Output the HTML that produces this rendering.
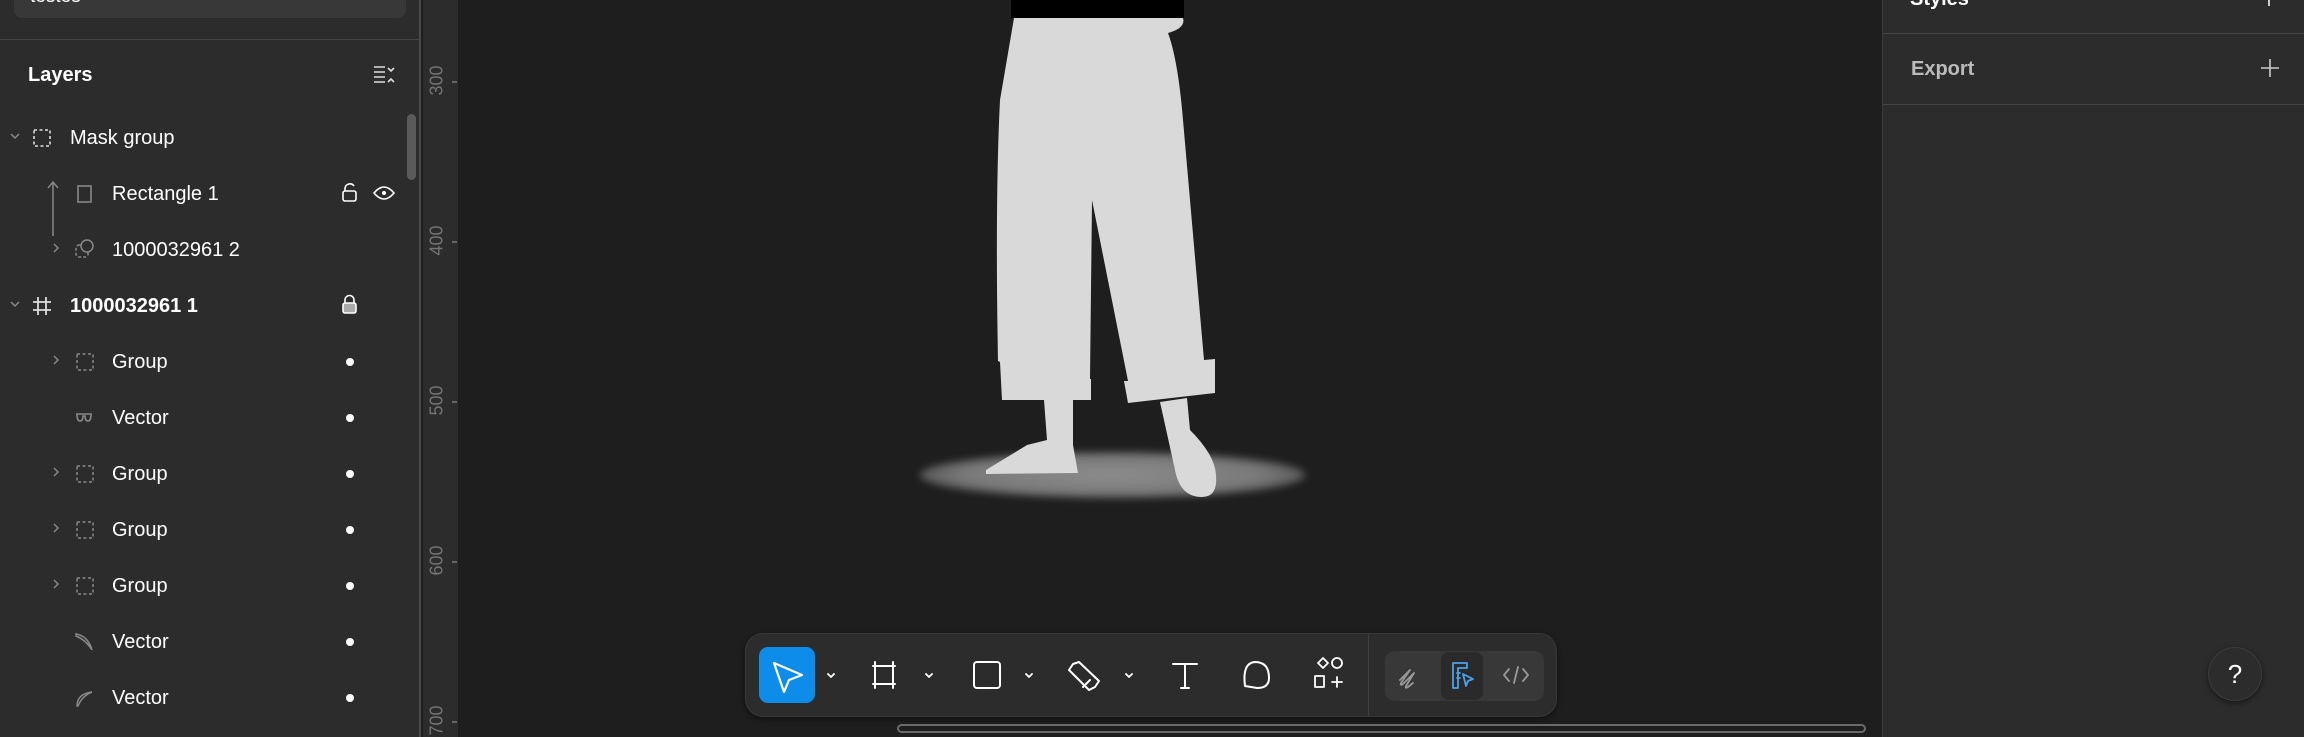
<!DOCTYPE html>
<html><head><meta charset="utf-8"><style>
*{margin:0;padding:0;box-sizing:border-box}
body{width:2304px;height:737px;overflow:hidden;background:#1e1e1e;font-family:"Liberation Sans",sans-serif;position:relative}
.abs{position:absolute}
#left{left:0;top:0;width:421px;height:737px;background:#2c2c2c;border-right:2px solid #4a4a4a}
#ruler{left:423px;top:0;width:35px;height:737px;background:#2c2c2c}
.rl{position:absolute;left:421px;width:32px;color:#747474;font-size:18px;transform:rotate(-90deg);text-align:center}
.tick{position:absolute;left:452px;width:5px;height:2px;background:#666}
.row{position:absolute;left:0;width:420px;height:56px;color:#fff;font-size:20px}
.row .t{position:absolute;top:17px}
.dot{position:absolute;left:346px;top:24px;width:8px;height:8px;border-radius:50%;background:#fff}
.chev{position:absolute;top:20px}
#right{left:1882px;top:0;width:422px;height:737px;background:#2c2c2c;border-left:1px solid #3c3c3c}
</style></head><body>
<div id="left" class="abs">
  <div class="abs" style="left:14px;top:-30px;width:392px;height:48px;background:#383838;border-radius:8px"></div>
  <div class="abs" style="left:30px;top:-14px;color:#fff;font-size:19px">testes</div>
  <div class="abs" style="left:0;top:39px;width:420px;height:1px;background:#444"></div>
  <div class="abs" style="left:28px;top:64px;color:#fff;font-size:20px;font-weight:bold">Layers</div>
  <svg class="abs" style="left:372px;top:64px" width="26" height="22" viewBox="0 0 26 22" fill="none" stroke="#ddd" stroke-width="1.6"><path d="M2 3h11M2 8h11M2 13h11M2 18h11M16 4l3 3 3-3M16 18l3-3 3 3"/></svg>
  <div class="abs" style="left:407px;top:114px;width:9px;height:66px;border-radius:5px;background:#5a5a5a"></div>

  <div class="row" style="top:110px">
    <svg class="chev" style="left:9px" width="12" height="12"><path d="M2 4l4 4 4-4" stroke="#888" fill="none" stroke-width="1.5"/></svg>
    <svg class="abs" style="left:32px;top:18px" width="20" height="20"><rect x="2" y="2" width="16" height="16" fill="none" stroke="#ddd" stroke-width="1.6" stroke-dasharray="3 2.5"/></svg>
    <span class="t" style="left:70px">Mask group</span>
  </div>
  <div class="row" style="top:166px">
    <svg class="abs" style="left:46px;top:14px" width="14" height="56"><path d="M7 2v54M2 8l5-6 5 6" stroke="#888" fill="none" stroke-width="1.5"/></svg>
    <svg class="abs" style="left:75px;top:18px" width="20" height="20"><rect x="3" y="2" width="13" height="16" fill="none" stroke="#888" stroke-width="1.6"/></svg>
    <span class="t" style="left:112px">Rectangle 1</span>
    <svg class="abs" style="left:341px;top:16px" width="18" height="22"><path d="M4 9V6a5 5 0 0 1 9-2" stroke="#fff" fill="none" stroke-width="1.6"/><rect x="2" y="9" width="13" height="10" rx="2" fill="none" stroke="#fff" stroke-width="1.6"/></svg>
    <svg class="abs" style="left:372px;top:17px" width="24" height="20"><path d="M2 10q10-12 20 0q-10 12-20 0z" stroke="#fff" fill="none" stroke-width="1.6"/><circle cx="12" cy="10" r="2" fill="#fff"/></svg>
  </div>
  <div class="row" style="top:222px">
    <svg class="chev" style="left:50px" width="12" height="12"><path d="M4 2l4 4-4 4" stroke="#888" fill="none" stroke-width="1.5"/></svg>
    <svg class="abs" style="left:74px;top:16px" width="22" height="22"><rect x="2" y="7" width="12" height="12" rx="3" fill="none" stroke="#888" stroke-width="1.5" stroke-dasharray="3 2"/><circle cx="13" cy="8" r="6" fill="#2c2c2c" stroke="#888" stroke-width="1.5"/></svg>
    <span class="t" style="left:112px">1000032961 2</span>
  </div>
  <div class="row" style="top:278px">
    <svg class="chev" style="left:9px" width="12" height="12"><path d="M2 4l4 4 4-4" stroke="#888" fill="none" stroke-width="1.5"/></svg>
    <svg class="abs" style="left:32px;top:18px" width="20" height="20"><path d="M6 1v18M14 1v18M1 6h18M1 14h18" stroke="#ddd" stroke-width="1.8"/></svg>
    <span class="t" style="left:70px;font-weight:bold">1000032961 1</span>
    <svg class="abs" style="left:341px;top:16px" width="18" height="22"><path d="M4 9V6a4.5 4.5 0 0 1 9 0v3" stroke="#fff" fill="none" stroke-width="1.6"/><rect x="2" y="9" width="13" height="10" rx="2" fill="#aaa" stroke="#fff" stroke-width="1.6"/></svg>
  </div>
  <div class="row" style="top:334px"><svg class="chev" style="left:50px" width="12" height="12"><path d="M4 2l4 4-4 4" stroke="#888" fill="none" stroke-width="1.5"/></svg><svg class="abs" style="left:75px;top:18px" width="20" height="20"><rect x="2" y="2" width="16" height="16" fill="none" stroke="#888" stroke-width="1.5" stroke-dasharray="3 2.5"/></svg><span class="t" style="left:112px">Group</span><div class="dot"></div></div>
  <div class="row" style="top:390px"><svg class="abs" style="left:74px;top:21px" width="20" height="14"><path d="M2 3h16M3 3q0 7 3 7t3-5h2q0 5 3 5t3-7" stroke="#888" fill="none" stroke-width="1.6"/></svg><span class="t" style="left:112px">Vector</span><div class="dot"></div></div>
  <div class="row" style="top:446px"><svg class="chev" style="left:50px" width="12" height="12"><path d="M4 2l4 4-4 4" stroke="#888" fill="none" stroke-width="1.5"/></svg><svg class="abs" style="left:75px;top:18px" width="20" height="20"><rect x="2" y="2" width="16" height="16" fill="none" stroke="#888" stroke-width="1.5" stroke-dasharray="3 2.5"/></svg><span class="t" style="left:112px">Group</span><div class="dot"></div></div>
  <div class="row" style="top:502px"><svg class="chev" style="left:50px" width="12" height="12"><path d="M4 2l4 4-4 4" stroke="#888" fill="none" stroke-width="1.5"/></svg><svg class="abs" style="left:75px;top:18px" width="20" height="20"><rect x="2" y="2" width="16" height="16" fill="none" stroke="#888" stroke-width="1.5" stroke-dasharray="3 2.5"/></svg><span class="t" style="left:112px">Group</span><div class="dot"></div></div>
  <div class="row" style="top:558px"><svg class="chev" style="left:50px" width="12" height="12"><path d="M4 2l4 4-4 4" stroke="#888" fill="none" stroke-width="1.5"/></svg><svg class="abs" style="left:75px;top:18px" width="20" height="20"><rect x="2" y="2" width="16" height="16" fill="none" stroke="#888" stroke-width="1.5" stroke-dasharray="3 2.5"/></svg><span class="t" style="left:112px">Group</span><div class="dot"></div></div>
  <div class="row" style="top:614px"><svg class="abs" style="left:74px;top:17px" width="20" height="22"><path d="M2 3q12 2 16 16q-6-10-16-14z" stroke="#888" fill="none" stroke-width="1.5"/></svg><span class="t" style="left:112px">Vector</span><div class="dot"></div></div>
  <div class="row" style="top:670px"><svg class="abs" style="left:74px;top:17px" width="20" height="22"><path d="M3 19q0-12 15-14q-10 4-14 14z" stroke="#888" fill="none" stroke-width="1.5"/></svg><span class="t" style="left:112px">Vector</span><div class="dot"></div></div>
</div>

<div id="ruler" class="abs"></div>
<div class="rl" style="top:70px">300</div><div class="tick" style="top:81px"></div>
<div class="rl" style="top:230px">400</div><div class="tick" style="top:241px"></div>
<div class="rl" style="top:390px">500</div><div class="tick" style="top:401px"></div>
<div class="rl" style="top:550px">600</div><div class="tick" style="top:561px"></div>
<div class="rl" style="top:710px">700</div><div class="tick" style="top:721px"></div>

<div class="abs" style="left:920px;top:452px;width:385px;height:46px;border-radius:50%;background:radial-gradient(ellipse at center,#8c8c8c 0%,#7a7a7a 55%,rgba(30,30,30,0) 100%);filter:blur(4px)"></div>
<svg class="abs" style="left:0;top:0" width="1882" height="737">
  <rect x="1011" y="0" width="173" height="18" fill="#000"/>
  <path d="M1014,18 L1183,18 Q1186,28 1168,33 Q1178,60 1183,120 L1204,360 L1215,359 L1215,393 L1128,403 L1124,381 L1128,381 L1092,200 L1090,379 L1091,379 L1091,400 L1002,400 L1000,362 L998,361 Q995,200 1000,100 Z" fill="#d9d9d9"/>
  <path d="M1044,400 L1073,400 L1073,445 L1078,473 L986,474 L986,470 L1027,445 L1047,440 Z" fill="#d9d9d9"/>
  <path d="M1160,402 L1187,398 L1190,430 Q1215,455 1216,475 Q1218,497 1202,497 Q1180,497 1175,470 Z" fill="#d9d9d9"/>
</svg>

<div class="abs" style="left:745px;top:633px;width:812px;height:84px;background:#2c2c2c;border:1px solid #383838;border-radius:18px;box-shadow:0 2px 6px rgba(0,0,0,.5)"></div>
<div class="abs" style="left:759px;top:647px;width:56px;height:56px;background:#0d8ce9;border-radius:9px"></div>
<svg class="abs" style="left:0;top:0" width="2304" height="737" fill="none" stroke="#fff" stroke-width="2" stroke-linejoin="round" stroke-linecap="round">
  <path d="M774,663 L802,675 L789,680 L784,692 Z" stroke-width="2.2"/>
  <path d="M828,674l3 3 3-3M926,674l3 3 3-3M1026,674l3 3 3-3M1126,674l3 3 3-3" stroke-width="1.8"/>
  <path d="M875,662v26M893,662v26M873,666h22M873,684h22"/>
  <rect x="974" y="662" width="26" height="26" rx="3"/>
  <path d="M1073,664 l6,-2 20,19 -4,6 -6,3 -20,-20 z M1090,680 l-7,7"/>
  <path d="M1173,664h24M1185,664v24M1181,688h8"/>
  <path d="M1245,686 q-3,-23 10,-24 q14,0 14,16 q0,10 -12,10 z"/>
  <path d="M1318,663l5-5 5 5-5 5z M1337,663 m-5,0 a5,5 0 1,0 10,0 a5,5 0 1,0 -10,0 M1315,676h9v11h-9z M1332,682h10M1337,677v10" stroke-width="1.8"/>
</svg>
<div class="abs" style="left:1368px;top:634px;width:1px;height:82px;background:#3e3e3e"></div>
<div class="abs" style="left:1385px;top:651px;width:159px;height:50px;background:#383838;border-radius:10px"></div>
<div class="abs" style="left:1441px;top:652px;width:42px;height:48px;background:#2a2a2a;border-radius:8px"></div>
<svg class="abs" style="left:0;top:0" width="2304" height="737" fill="none" stroke-width="1.8" stroke-linecap="round" stroke-linejoin="round">
  <path d="M1400,680 l10,-10 -9,13 q-1,3 2,1 l11,-11 -8,13 q-1,3 2,1 l5,-4" stroke="#999"/>
  <path d="M1453,663h14v5h-9v20h-5z M1457,673h3M1457,678h3" stroke="#4aa3ea"/>
  <path d="M1463,674l10,5-5,2-2,5z" stroke="#4aa3ea"/>
  <path d="M1509,669l-5 6 5 6M1523,669l5 6-5 6M1518,667l-4 16" stroke="#999"/>
</svg>
<div class="abs" style="left:897px;top:724px;width:969px;height:9px;border:2px solid #6a6a6a;border-radius:5px"></div>

<div id="right" class="abs">
  <div class="abs" style="left:27px;top:-12px;color:#fff;font-size:20px;font-weight:bold">Styles</div>
  <div class="abs" style="left:385px;top:0;width:1.5px;height:6px;background:#ccc"></div>
  <div class="abs" style="left:0;top:33px;width:422px;height:1px;background:#444"></div>
  <div class="abs" style="left:28px;top:58px;color:#bbb;font-size:20px;font-weight:bold">Export</div>
  <svg class="abs" style="left:376px;top:57px" width="22" height="22"><path d="M11 2v18M2 11h18" stroke="#ccc" stroke-width="1.6"/></svg>
  <div class="abs" style="left:0;top:104px;width:422px;height:1px;background:#444"></div>
  <div class="abs" style="left:325px;top:647px;width:54px;height:54px;border-radius:50%;background:#2c2c2c;border:1px solid #3c3c3c;box-shadow:0 2px 6px rgba(0,0,0,.5);color:#fff;font-size:26px;text-align:center;line-height:52px">?</div>
</div>
</body></html>
